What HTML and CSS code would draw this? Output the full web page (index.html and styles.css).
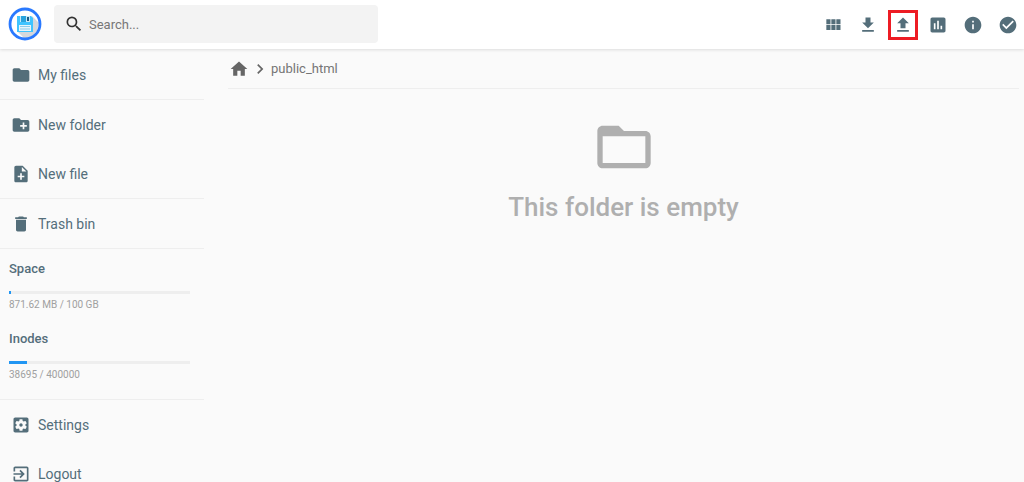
FILE: index.html
```html
<!DOCTYPE html>
<html lang="en">
<head>
    <meta charset="UTF-8">
    <meta name="viewport" content="width=device-width, initial-scale=1.0">
    <title>File Manager</title>
    <link rel="stylesheet" href="styles.css">
</head>
<body>
<header class="topbar">
    <a class="logo" href="#" aria-label="Home">
        <svg viewBox="0 0 34 34">
            <circle cx="17" cy="17" r="15" fill="#fff"/>
            <path d="M24 9l7 7-2 8-6 6-6 2-7-7z" fill="#d5d8dc"/>
            <path d="M9 9h14l2 2v14H9z" fill="#40c4ff"/>
            <path d="M12 9h10v6H12z" fill="#c5e8f7"/>
            <path d="M13 9h5v6h-5z" fill="#29a3dd"/>
            <path d="M19 10h2v4h-2z" fill="#1b5c86"/>
            <path d="M11 18h12v6H11z" fill="#e6f5fc"/>
            <path d="M12 19.500h10M12 22h10" stroke="#8ccbea" stroke-width="1"/>
            <circle cx="17" cy="17" r="15" fill="none" stroke="#2979ff" stroke-width="2.800"/>
        </svg>
    </a>
    <form class="search">
        <label for="search" aria-label="Search">
            <svg class="icon" viewBox="0 0 24 24"><path d="M15.500 14h-.79l-.28-.27A6.471 6.471 0 0 0 16 9.500 6.500 6.500 0 1 0 9.500 16c1.610 0 3.090-.59 4.230-1.570l.27.28v.79l5 4.990L20.490 19l-4.990-5zm-6 0C7.010 14 5 11.990 5 9.500S7.010 5 9.500 5 14 7.010 14 9.500 11.990 14 9.500 14z"/></svg>
        </label>
        <input type="text" id="search" placeholder="Search...">
    </form>
    <div class="actions">
        <button type="button" aria-label="Grid view">
            <svg class="icon" viewBox="0 0 24 24"><path d="M4 11h5V5H4v6zm0 7h5v-6H4v6zm6 0h5v-6h-5v6zm6 0h5v-6h-5v6zm-6-7h5V5h-5v6zm6-6v6h5V5h-5z"/></svg>
        </button>
        <button type="button" aria-label="Download">
            <svg class="icon" viewBox="0 0 24 24"><path d="M19 9h-4V3H9v6H5l7 7 7-7zM5 18v2h14v-2H5z"/></svg>
        </button>
        <button type="button" class="marked" aria-label="Upload">
            <svg class="icon" viewBox="0 0 24 24"><path d="M9 16h6v-6h4l-7-7-7 7h4zm-4 2h14v2H5z"/></svg>
        </button>
        <button type="button" aria-label="Statistics">
            <svg class="icon" viewBox="0 0 24 24"><path d="M19 3H5c-1.100 0-2 .9-2 2v14c0 1.100.9 2 2 2h14c1.100 0 2-.9 2-2V5c0-1.100-.9-2-2-2zM9 17H7v-7h2v7zm4 0h-2V7h2v10zm4 0h-2v-4h2v4z"/></svg>
        </button>
        <button type="button" aria-label="Info">
            <svg class="icon" viewBox="0 0 24 24"><path d="M12 2C6.480 2 2 6.480 2 12s4.480 10 10 10 10-4.480 10-10S17.520 2 12 2zm1 15h-2v-6h2v6zm0-8h-2V7h2v2z"/></svg>
        </button>
        <button type="button" aria-label="Select all">
            <svg class="icon" viewBox="0 0 24 24"><path d="M12 2C6.480 2 2 6.480 2 12s4.480 10 10 10 10-4.480 10-10S17.520 2 12 2zm-2 15l-5-5 1.410-1.410L10 14.170l7.590-7.590L19 8l-9 9z"/></svg>
        </button>
    </div>
</header>

<div class="page">
    <nav class="sidebar">
        <div class="group">
            <a href="#">
                <svg class="icon" viewBox="0 0 24 24"><path d="M10 4H4c-1.100 0-1.990.9-1.990 2L2 18c0 1.100.9 2 2 2h16c1.100 0 2-.9 2-2V8c0-1.100-.9-2-2-2h-8l-2-2z"/></svg>
                My files
            </a>
        </div>
        <div class="group">
            <a href="#">
                <svg class="icon" viewBox="0 0 24 24"><path d="M20 6h-8l-2-2H4c-1.110 0-1.990.89-1.990 2L2 18c0 1.110.89 2 2 2h16c1.110 0 2-.89 2-2V8c0-1.110-.89-2-2-2zm-1 8h-3v3h-2v-3h-3v-2h3V9h2v3h3v2z"/></svg>
                New folder
            </a>
            <a href="#">
                <svg class="icon" viewBox="0 0 24 24"><path d="M14 2H6c-1.100 0-1.990.9-1.990 2L4 20c0 1.100.89 2 1.990 2H18c1.100 0 2-.9 2-2V8l-6-6zm2 14h-3v3h-2v-3H8v-2h3v-3h2v3h3v2zm-3-7V3.500L18.500 9H13z"/></svg>
                New file
            </a>
        </div>
        <div class="group">
            <a href="#">
                <svg class="icon" viewBox="0 0 24 24"><path d="M6 19c0 1.100.9 2 2 2h8c1.100 0 2-.9 2-2V7H6v12zM19 4h-3.500l-1-1h-5l-1 1H5v2h14V4z"/></svg>
                Trash bin
            </a>
        </div>
        <div class="group usage">
            <div class="meter">
                <h2>Space</h2>
                <div class="bar"><div class="fill" style="width: 1%"></div></div>
                <p>871.62 MB / 100 GB</p>
            </div>
            <div class="meter">
                <h2>Inodes</h2>
                <div class="bar"><div class="fill" style="width: 9.67%"></div></div>
                <p>38695 / 400000</p>
            </div>
        </div>
        <div class="group">
            <a href="#">
                <svg class="icon" viewBox="0 0 24 24"><path d="M12 10c-1.100 0-2 .9-2 2s.9 2 2 2 2-.9 2-2-.9-2-2-2zm7-7H5c-1.110 0-2 .9-2 2v14c0 1.100.89 2 2 2h14c1.110 0 2-.9 2-2V5c0-1.100-.89-2-2-2zm-1.750 9c0 .23-.02.46-.05.68l1.480 1.160c.13.11.17.3.08.45l-1.400 2.420c-.09.15-.27.21-.43.15l-1.740-.7c-.36.28-.76.51-1.180.69l-.26 1.850c-.03.17-.18.3-.35.3h-2.800c-.17 0-.32-.13-.35-.29l-.26-1.850c-.43-.18-.82-.41-1.180-.69l-1.740.7c-.16.06-.34 0-.43-.15l-1.400-2.420c-.09-.15-.05-.34.08-.45l1.480-1.160c-.03-.23-.05-.46-.05-.69s.02-.46.05-.68l-1.480-1.160c-.13-.11-.17-.3-.08-.45l1.400-2.420c.09-.15.27-.21.43-.15l1.740.7c.36-.28.76-.51 1.180-.69l.26-1.850c.03-.17.18-.3.35-.3h2.800c.17 0 .32.13.35.29l.26 1.850c.43.18.82.41 1.180.69l1.740-.7c.16-.06.34 0 .43.15l1.400 2.420c.09.15.05.34-.08.45l-1.480 1.160c.03.23.05.46.05.69z"/></svg>
                Settings
            </a>
            <a href="#">
                <svg class="icon" viewBox="0 0 24 24"><path d="M10.090 15.590L11.500 17l5-5-5-5-1.410 1.410L12.670 11H3v2h9.670l-2.580 2.590zM19 3H5c-1.110 0-2 .9-2 2v4h2V5h14v14H5v-4H3v4c0 1.100.89 2 2 2h14c1.100 0 2-.9 2-2V5c0-1.100-.9-2-2-2z"/></svg>
                Logout
            </a>
        </div>
    </nav>

    <main class="content">
        <div class="breadcrumbs">
            <a href="#" aria-label="Home"><svg class="icon" viewBox="0 0 24 24"><path d="M10 20v-6h4v6h5v-8h3L12 3 2 12h3v8z"/></svg></a>
            <svg class="icon" viewBox="0 0 24 24"><path d="M10 6L8.590 7.410 13.170 12l-4.580 4.590L10 18l6-6z"/></svg>
            <a href="#">public_html</a>
        </div>
        <div class="empty">
            <svg class="icon" viewBox="0 0 24 24"><path d="M20 6h-8l-2-2H4c-1.100 0-1.990.9-1.990 2L2 18c0 1.100.9 2 2 2h16c1.100 0 2-.9 2-2V8c0-1.100-.9-2-2-2zm0 12H4V8h16v10z"/></svg>
            <p>This folder is empty</p>
        </div>
    </main>
</div>
</body>
</html>
```

FILE: styles.css
```css
* {
    box-sizing: border-box;
}
body {
    display: flex;
    flex-direction: column;
    height: 100vh;
    margin: 0;
    overflow: hidden;
    background: #fafafa;
    color: #546e7a;
    font-family: Roboto, Arial, sans-serif;
    font-size: 14px;
}
a {
    color: inherit;
    text-decoration: none;
}
h2, p {
    margin: 0;
}
.icon {
    display: block;
    flex: none;
    width: 20px;
    height: 20px;
    fill: currentColor;
}

/* top bar */
.topbar {
    display: flex;
    flex: none;
    align-items: center;
    padding: 5px 1px 6px 8px;
    background: #fff;
    box-shadow: 0 1px 3px rgba(0, 0, 0, 0.12);
}
.logo svg {
    display: block;
    width: 34px;
    height: 34px;
}
.search {
    display: flex;
    align-items: center;
    width: 324px;
    height: 38px;
    margin-left: 12px;
    padding: 0 10px;
    border-radius: 4px;
    background: #f3f3f3;
}
.search .icon {
    color: #333;
}
.search input {
    flex: 1;
    min-width: 0;
    padding: 0 5px;
    border: none;
    outline: none;
    background: none;
    color: #333;
    font: inherit;
    font-size: 13px;
}
.search input::placeholder {
    color: #777;
    opacity: 1;
}
.actions {
    display: flex;
    gap: 5px;
    margin-left: auto;
    padding-top: 2px;
}
.actions button {
    display: flex;
    align-items: center;
    justify-content: center;
    width: 30px;
    height: 30px;
    padding: 0;
    border: none;
    background: none;
    color: #546e7a;
    cursor: pointer;
}
.actions .marked {
    border: 3px solid #ed1c24;
}

.page {
    display: flex;
    flex: 1;
    min-height: 0;
}

/* sidebar */
.sidebar {
    flex: none;
    width: 204px;
    padding-top: 1px;
    overflow: hidden;
}
.group {
    border-bottom: 1px solid #eee;
}
.group a {
    display: flex;
    align-items: center;
    gap: 7px;
    height: 49px;
    padding-left: 11px;
}
.usage {
    padding: 12px 14px 17px 9px;
}
.meter + .meter {
    margin-top: 19px;
}
.meter h2 {
    margin-bottom: 14px;
    font-size: 13px;
    font-weight: 500;
    line-height: 16px;
}
.meter p {
    margin-top: 4px;
    color: #a0a0a0;
    font-size: 10px;
    line-height: 14px;
}
.bar {
    height: 3px;
    background: #eee;
}
.fill {
    height: 100%;
    background: #2196f3;
}

/* folder contents */
.content {
    flex: 1;
    padding: 0 5px 0 24px;
}
.breadcrumbs {
    display: flex;
    align-items: center;
    gap: 1px;
    height: 40px;
    padding-left: 1px;
    border-bottom: 1px solid #eee;
    color: #757575;
    font-size: 13px;
}
.breadcrumbs .icon {
    color: #666;
}
.empty {
    display: flex;
    flex-direction: column;
    align-items: center;
    padding-top: 26px;
    color: #afafaf;
}
.empty .icon {
    width: 64px;
    height: 64px;
}
.empty p {
    margin-top: 12px;
    font-size: 26px;
    font-weight: 500;
    line-height: 32px;
}
```
